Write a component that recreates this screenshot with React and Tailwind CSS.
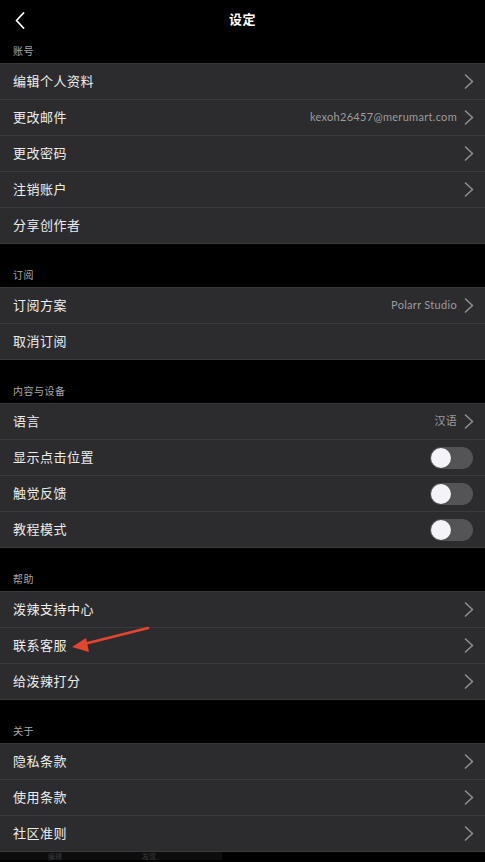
import { useState } from 'react'

const font = { fontFamily: '"Noto Sans CJK SC", "Noto Sans", sans-serif' }

function Chevron() {
  return (
    <svg width="10" height="15" viewBox="0 0 10 15" className="ml-[7px] shrink-0">
      <path d="M1.5 1 L8.5 7.5 L1.5 14" fill="none" stroke="#8e8e90" strokeWidth="1.6" strokeLinecap="round" strokeLinejoin="round" />
    </svg>
  )
}

function Toggle() {
  const [on, setOn] = useState(false)
  return (
    <button
      onClick={() => setOn(!on)}
      className={`relative w-[43px] h-[22px] mr-[1px] rounded-full ${on ? 'bg-[#34c759]' : 'bg-[#545456]'}`}
    >
      <span
        className={`absolute top-[1px] w-[20px] h-[20px] rounded-full bg-[#f4f4f8] shadow ${on ? 'left-[22px]' : 'left-[1px]'}`}
      />
    </button>
  )
}

function Row({ label, value, chevron, toggle, children }) {
  return (
    <div className="relative flex items-center h-[36px] pl-[13px] pr-[11px] border-t border-[#3a3a3c]">
      <span className="text-[13px] leading-[16px] -mt-[2px] text-[#ececec] tracking-[0.5px]">{label}</span>
      <div className="ml-auto flex items-center">
        {value && (
          <span className="text-[11px] -mt-[1px] text-[#9c9c9e] tracking-[0.3px]" style={{ fontFamily: 'Lato, "Noto Sans CJK SC", sans-serif' }}>
            {value}
          </span>
        )}
        {chevron && <Chevron />}
        {toggle && <Toggle />}
      </div>
      {children}
    </div>
  )
}

function Section({ title, first }) {
  return (
    <div className={`flex items-end pl-[13px] pb-[5px] ${first ? 'h-[25px]' : 'h-[43px]'}`}>
      <span className="text-[10px] leading-[14px] text-[#a8a8aa] tracking-[0.5px]">{title}</span>
    </div>
  )
}

function Group({ children }) {
  return <div className="bg-[#2c2c2e] border-b border-[#3a3a3c]">{children}</div>
}

function Arrow() {
  return (
    <svg width="120" height="34" viewBox="0 0 120 34" className="absolute left-[40px] top-[-3px]">
      <line x1="108" y1="3" x2="44" y2="19" stroke="#e4452f" strokeWidth="2.6" strokeLinecap="round" />
      <polygon points="32,22 46,13 49,27" fill="#e4452f" />
    </svg>
  )
}

export default function App() {
  return (
    <div className="w-[485px] min-h-[862px] bg-black overflow-hidden" style={font}>
      <div className="relative h-[38px] flex items-center justify-center">
        <svg width="10" height="17" viewBox="0 0 10 17" className="absolute left-[15px] top-[12px]">
          <path d="M8.5 1 L1.5 8.5 L8.5 16" fill="none" stroke="#ffffff" strokeWidth="1.8" strokeLinecap="round" strokeLinejoin="round" />
        </svg>
        <span className="text-[13px] font-bold text-white tracking-[0.5px]">设定</span>
      </div>

      <Section title="账号" first />
      <Group>
        <Row label="编辑个人资料" chevron />
        <Row label="更改邮件" value="kexoh26457@merumart.com" chevron />
        <Row label="更改密码" chevron />
        <Row label="注销账户" chevron />
        <Row label="分享创作者" />
      </Group>

      <Section title="订阅" />
      <Group>
        <Row label="订阅方案" value="Polarr Studio" chevron />
        <Row label="取消订阅" />
      </Group>

      <Section title="内容与设备" />
      <Group>
        <Row label="语言" value="汉语" chevron />
        <Row label="显示点击位置" toggle />
        <Row label="触觉反馈" toggle />
        <Row label="教程模式" toggle />
      </Group>

      <Section title="帮助" />
      <Group>
        <Row label="泼辣支持中心" chevron />
        <Row label="联系客服" chevron>
          <Arrow />
        </Row>
        <Row label="给泼辣打分" chevron />
      </Group>

      <Section title="关于" />
      <Group>
        <Row label="隐私条款" chevron />
        <Row label="使用条款" chevron />
        <Row label="社区准则" chevron />
      </Group>

      <div className="flex h-[8px] w-[222px] bg-[#0d0d0d] items-center text-[7px] text-[#3a3a3a]">
        <span className="ml-[48px]">编辑</span>
        <span className="ml-[80px]">发现</span>
      </div>
    </div>
  )
}
